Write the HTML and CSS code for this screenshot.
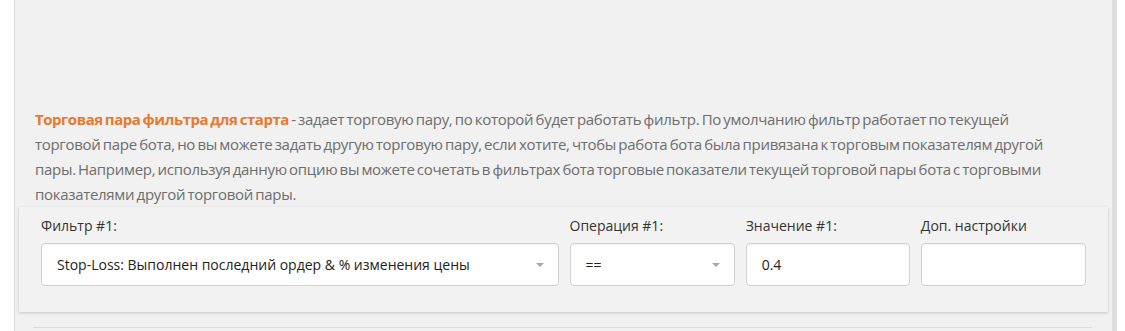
FILE: index.html
```html
<!DOCTYPE html>
<html lang="ru">
<head>
    <meta charset="UTF-8">
    <meta name="viewport" content="width=device-width, initial-scale=1.0">
    <title>Фильтры бота</title>
    <link rel="stylesheet" href="styles.css">
</head>
<body>
    <div class="panel">
        <p class="help">
            <span class="help-title">Торговая пара фильтра для старта</span> - задает торговую пару, по которой будет работать фильтр. По умолчанию фильтр работает по текущей торговой паре бота, но вы можете задать другую торговую пару, если хотите, чтобы работа бота была привязана к торговым показателям другой пары. Например, используя данную опцию вы можете сочетать в фильтрах бота торговые показатели текущей торговой пары бота с торговыми показателями другой торговой пары.
        </p>

        <!-- one filter row: filter / operation / value / extra -->
        <div class="filter-card">
            <div class="field">
                <label for="filter-1">Фильтр #1:</label>
                <div class="select-wrapper">
                    <select id="filter-1" name="filter-1">
                        <option>Stop-Loss: Выполнен последний ордер &amp; % изменения цены</option>
                    </select>
                </div>
            </div>
            <div class="field">
                <label for="op-1">Операция #1:</label>
                <div class="select-wrapper">
                    <select id="op-1" name="op-1">
                        <option>==</option>
                    </select>
                </div>
            </div>
            <div class="field">
                <label for="value-1">Значение #1:</label>
                <input id="value-1" name="value-1" type="text" value="0.4">
            </div>
            <div class="field">
                <label for="extra-1">Доп. настройки</label>
                <input id="extra-1" name="extra-1" type="text">
            </div>
        </div>

        <div class="next-card"></div>
    </div>
</body>
</html>
```

FILE: styles.css
```css
* {
    box-sizing: border-box;
}

body {
    margin: 0;
    background: #fff;
    font-family: "Open Sans", "Noto Sans", sans-serif;
    color: #333;
}

.panel {
    margin-left: 14px;
    width: 1103px;
    height: 331px;
    overflow: hidden;
    background: #f1f1f1;
    border-left: 1px solid #dcdcdc;
    border-right: 5px solid #dedede;
    padding: 107px 4px 0 4px;
}

.help {
    margin: 0;
    padding: 0 50px 0 16px;
    font-size: 15px;
    line-height: 25px;
    color: #6d6d6d;
    letter-spacing: -0.3px;
    word-spacing: -1.3px;
}

.help-title {
    color: #e8792f;
    font-weight: 700;
    letter-spacing: -0.45px;
}

.filter-card {
    display: grid;
    grid-template-columns: 517fr 165fr 164fr 165fr;
    column-gap: 11px;
    padding: 10px 22px 26px 22px;
    background: #f2f2f2;
    box-shadow: 0 1px 3px rgba(0, 0, 0, 0.18);
}

.field label {
    display: block;
    font-size: 14px;
    line-height: 18px;
    margin-bottom: 8px;
    color: #333;
}

select,
input[type="text"] {
    -webkit-appearance: none;
    appearance: none;
    width: 100%;
    height: 43px;
    padding: 0 30px 0 15px;
    font-family: "Open Sans", "Noto Sans", sans-serif;
    font-size: 14px;
    color: #222;
    background: #fff;
    border: 1px solid #d2d2d2;
    border-radius: 4px;
    box-shadow: inset 0 1px 2px rgba(0, 0, 0, 0.06);
    outline: none;
}

.select-wrapper {
    position: relative;
}

/* small grey caret on the right of each select */
.select-wrapper::after {
    content: "";
    position: absolute;
    right: 15px;
    top: 20px;
    border-left: 4px solid transparent;
    border-right: 4px solid transparent;
    border-top: 4px solid #a8a8a8;
}

.next-card {
    margin: 15px 16px 0 14px;
    border-top: 1px solid #dcdcdc;
    height: 20px;
}
```
